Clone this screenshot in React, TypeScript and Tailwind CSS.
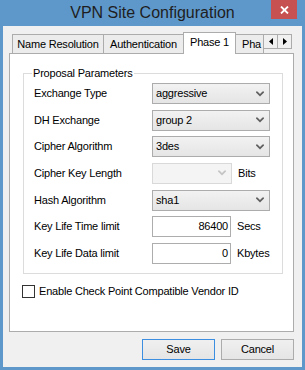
import React from 'react';

type Row =
  | { label: string; kind: 'select'; value: string }
  | { label: string; kind: 'disabled'; unit: string }
  | { label: string; kind: 'input'; value: string; unit: string };

const rows: Row[] = [
  { label: 'Exchange Type', kind: 'select', value: 'aggressive' },
  { label: 'DH Exchange', kind: 'select', value: 'group 2' },
  { label: 'Cipher Algorithm', kind: 'select', value: '3des' },
  { label: 'Cipher Key Length', kind: 'disabled', unit: 'Bits' },
  { label: 'Hash Algorithm', kind: 'select', value: 'sha1' },
  { label: 'Key Life Time limit', kind: 'input', value: '86400', unit: 'Secs' },
  { label: 'Key Life Data limit', kind: 'input', value: '0', unit: 'Kbytes' },
];

function Chevron({ color }: { color: string }) {
  return (
    <svg width="8" height="6" viewBox="0 0 8 6" className="shrink-0">
      <path d="M0 0.5 L1.5 0.5 L4 3 L6.5 0.5 L8 0.5 L8 1.5 L4 5.5 L0 1.5 Z" fill={color} />
    </svg>
  );
}

function Field({ row }: { row: Row }) {
  if (row.kind === 'select') {
    return (
      <div className="w-[118px] h-[21px] border border-[#acacac] bg-gradient-to-b from-[#f2f2f2] to-[#e5e5e5] flex items-center justify-between pl-[3px] pr-[5px]">
        <span>{row.value}</span>
        <Chevron color="#5f5f5f" />
      </div>
    );
  }
  if (row.kind === 'disabled') {
    return (
      <div className="flex items-center">
        <div className="w-[80px] h-[21px] border border-[#d9d9d9] bg-[#f4f4f4] flex items-center justify-end pr-[5px]">
          <Chevron color="#c4c4c4" />
        </div>
        <span className="ml-[6px]">{row.unit}</span>
      </div>
    );
  }
  return (
    <div className="flex items-center">
      <div className="w-[79px] h-[21px] border border-[#adadad] bg-white flex items-center justify-end pr-[2px]">
        {row.value}
      </div>
      <span className="ml-[6px]">{row.unit}</span>
    </div>
  );
}

function Tab({ label, width, selected }: { label: string; width: string; selected?: boolean }) {
  return (
    <div
      className={`${width} -ml-px first:ml-0 flex items-center justify-center border border-b-0 border-[#acacac] ${
        selected ? 'h-[22px] -mb-px bg-white relative z-10 pb-[2px]' : 'h-[19px] bg-[#ececec]'
      }`}
    >
      {label}
    </div>
  );
}

export default function App() {
  return (
    <div className="w-[305px] h-[370px] bg-[#5e98cb] flex flex-col font-['Liberation_Sans',Arial,sans-serif] text-[11px] leading-[13px] tracking-[-0.2px] text-black">
      <div className="relative h-[26px] flex items-center justify-center pb-[1px]">
        <span className="text-[16px] leading-[20px] tracking-normal text-[#1e1e1e]">VPN Site Configuration</span>
        <div className="absolute right-[8px] top-0 w-[26px] h-[19px] bg-[#c75050] flex items-center justify-center">
          <svg width="9" height="8" viewBox="0 0 9 8">
            <path d="M1 0.5 L8 7.5 M8 0.5 L1 7.5" stroke="#fff" strokeWidth="1.8" />
          </svg>
        </div>
      </div>

      <div className="mx-[3px] mb-[3px] flex-1 bg-[#f0f0f0] flex flex-col pt-[6px] pl-[6px] pr-[8px]">
        <div className="h-[21px] flex items-end pl-[3px]">
          <Tab label="Name Resolution" width="w-[92px]" />
          <Tab label="Authentication" width="w-[81px]" />
          <Tab label="Phase 1" width="w-[53px]" selected />
          <div className="w-[29px] h-[19px] -ml-px overflow-hidden border border-b-0 border-[#acacac] bg-[#ececec] flex items-center pl-[6px] whitespace-nowrap">
            Pha
          </div>
          <div className="self-start mt-[2px] -ml-px flex relative z-10">
            <div className="w-[15px] h-[15px] border border-[#acacac] bg-[#f0f0f0] flex items-center justify-center">
              <svg width="4" height="7" viewBox="0 0 4 7">
                <path d="M4 0 L0 3.5 L4 7 Z" fill="#000" />
              </svg>
            </div>
            <div className="w-[15px] h-[15px] -ml-px border border-[#acacac] bg-[#f0f0f0] flex items-center justify-center">
              <svg width="4" height="7" viewBox="0 0 4 7">
                <path d="M0 0 L4 3.5 L0 7 Z" fill="#000" />
              </svg>
            </div>
          </div>
        </div>

        <div className="h-[279px] border border-[#acacac] bg-white flex flex-col">
          <div className="relative mt-[19px] ml-[13px] w-[260px] border border-[#dcdcdc] pt-[9px] pb-[9px] pl-[10px]">
            <span className="absolute -top-[7px] left-[8px] px-[1px] bg-white">Proposal Parameters</span>
            <div className="flex flex-col gap-[5.67px]">
              {rows.map((row) => (
                <div key={row.label} className="h-[21px] flex items-center">
                  <span className="w-[118px]">{row.label}</span>
                  <Field row={row} />
                </div>
              ))}
            </div>
          </div>
          <div className="mt-[11px] ml-[12px] flex items-center">
            <div className="w-[13px] h-[13px] border border-[#333] bg-white" />
            <span className="ml-[4px]">Enable Check Point Compatible Vendor ID</span>
          </div>
        </div>

        <div className="mt-[7px] flex justify-end gap-[6px]">
          <button className="w-[73px] h-[21px] border border-[#3c8fe0] bg-gradient-to-b from-[#f0f0f0] to-[#e5e5e5]">Save</button>
          <button className="w-[73px] h-[21px] border border-[#acacac] bg-gradient-to-b from-[#f0f0f0] to-[#e5e5e5]">Cancel</button>
        </div>
      </div>
    </div>
  );
}
